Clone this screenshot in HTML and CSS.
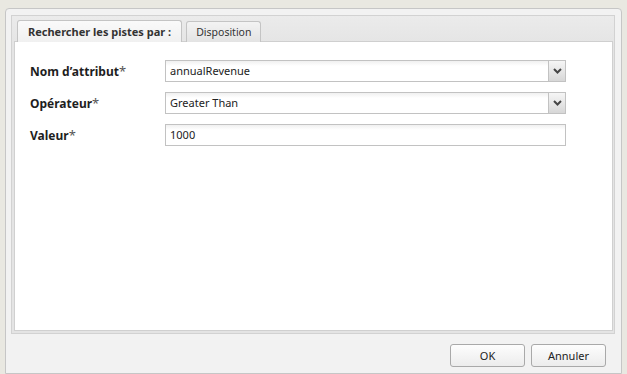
FILE: index.html
```html
<!DOCTYPE html>
<html lang="fr">
<head>
    <meta charset="UTF-8">
    <title>Rechercher les pistes</title>
    <link rel="stylesheet" href="styles.css">
</head>
<body>
    <div class="window">
        <div class="tab-panel">
            <div class="tab-strip">
                <div class="tab tab-active">Rechercher les pistes par :</div>
                <div class="tab">Disposition</div>
            </div>
            <div class="tab-body">
                <div class="form-row">
                    <label class="field-label">Nom d’attribut<span class="req">*</span></label>
                    <div class="combo">
                        <div class="combo-text">annualRevenue</div>
                        <div class="combo-btn">
                            <svg width="9" height="6" viewBox="0 0 9 6"><path d="M1 1 L4.5 4.5 L8 1" fill="none" stroke="#454545" stroke-width="2"/></svg>
                        </div>
                    </div>
                </div>
                <div class="form-row">
                    <label class="field-label">Opérateur<span class="req">*</span></label>
                    <div class="combo">
                        <div class="combo-text">Greater Than</div>
                        <div class="combo-btn">
                            <svg width="9" height="6" viewBox="0 0 9 6"><path d="M1 1 L4.5 4.5 L8 1" fill="none" stroke="#454545" stroke-width="2"/></svg>
                        </div>
                    </div>
                </div>
                <div class="form-row">
                    <label class="field-label">Valeur<span class="req">*</span></label>
                    <div class="combo">
                        <div class="combo-text">1000</div>
                    </div>
                </div>
            </div>
        </div>
        <div class="footer">
            <button class="btn">OK</button>
            <button class="btn">Annuler</button>
        </div>
    </div>
</body>
</html>
```

FILE: styles.css
```css
* {
    margin: 0;
    padding: 0;
    box-sizing: border-box;
}

body {
    font-family: "Noto Sans", "DejaVu Sans", sans-serif;
    font-size: 11px;
    color: #222;
    background: #e9e8e1;
    padding: 8px 0 0 5px;
    height: 374px;
    overflow: hidden;
}

.window {
    width: 617px;
    height: 366px;
    background: #f2f2f2;
    border: 1px solid #c6c6c6;
    border-radius: 4px 4px 0 0;
    padding: 6px 6px 0 5px;
}

.tab-panel {
    height: 319px;
    border: 1px solid #d2d2d2;
    background: linear-gradient(#ebebeb, #e4e4e4 30px);
    padding: 0 1px 2px 2px;
    display: flex;
    flex-direction: column;
}

.tab-strip {
    display: flex;
    gap: 4px;
    padding: 4px 0 0 3px;
    height: 26px;
    border-bottom: 1px solid #cfcfcf;
}

.tab {
    height: 21px;
    margin-top: 1px;
    padding: 0 9px;
    line-height: 20px;
    font-size: 10.5px;
    color: #333;
    background: linear-gradient(#f3f3f3, #e3e3e3);
    border: 1px solid #c4c4c4;
    border-bottom: none;
    border-radius: 3px 3px 0 0;
}

.tab-active {
    height: 22px;
    margin-top: 0;
    margin-bottom: -1px;
    padding: 0 10px;
    font-size: 11px;
    font-weight: bold;
    background: linear-gradient(#fafafa, #f0f0f0);
    line-height: 22px;
}

.tab-body {
    flex: 1;
    background: #fff;
    border: 1px solid #d0d0d0;
    border-top: none;
    padding: 18px 0 0 15px;
    display: flex;
    flex-direction: column;
    gap: 10px;
}

.form-row {
    display: flex;
    align-items: center;
    height: 22px;
}

.field-label {
    width: 135px;
    font-size: 12px;
    font-weight: bold;
    color: #1e1e1e;
}

.req {
    font-size: 13px;
    font-weight: normal;
    color: #555;
}

.combo {
    width: 401px;
    height: 22px;
    display: flex;
    border: 1px solid #c2c2c2;
    background: linear-gradient(#f0f0f0, #fff 5px);
}

.combo-text {
    flex: 1;
    padding-left: 4px;
    line-height: 20px;
    color: #222;
}

.combo-btn {
    width: 17px;
    border-left: 1px solid #c2c2c2;
    background: linear-gradient(#f6f6f6, #d7d7d7);
    display: flex;
    align-items: center;
    justify-content: center;
}

.footer {
    display: flex;
    justify-content: flex-end;
    gap: 6px;
    padding: 10px 9px 0 0;
}

.btn {
    width: 75px;
    height: 23px;
    font-family: "Noto Sans", "DejaVu Sans", sans-serif;
    font-size: 11px;
    color: #222;
    border: 1px solid #a9a9a9;
    border-radius: 3px;
    background: linear-gradient(#fdfdfd, #ececec);
}
```
